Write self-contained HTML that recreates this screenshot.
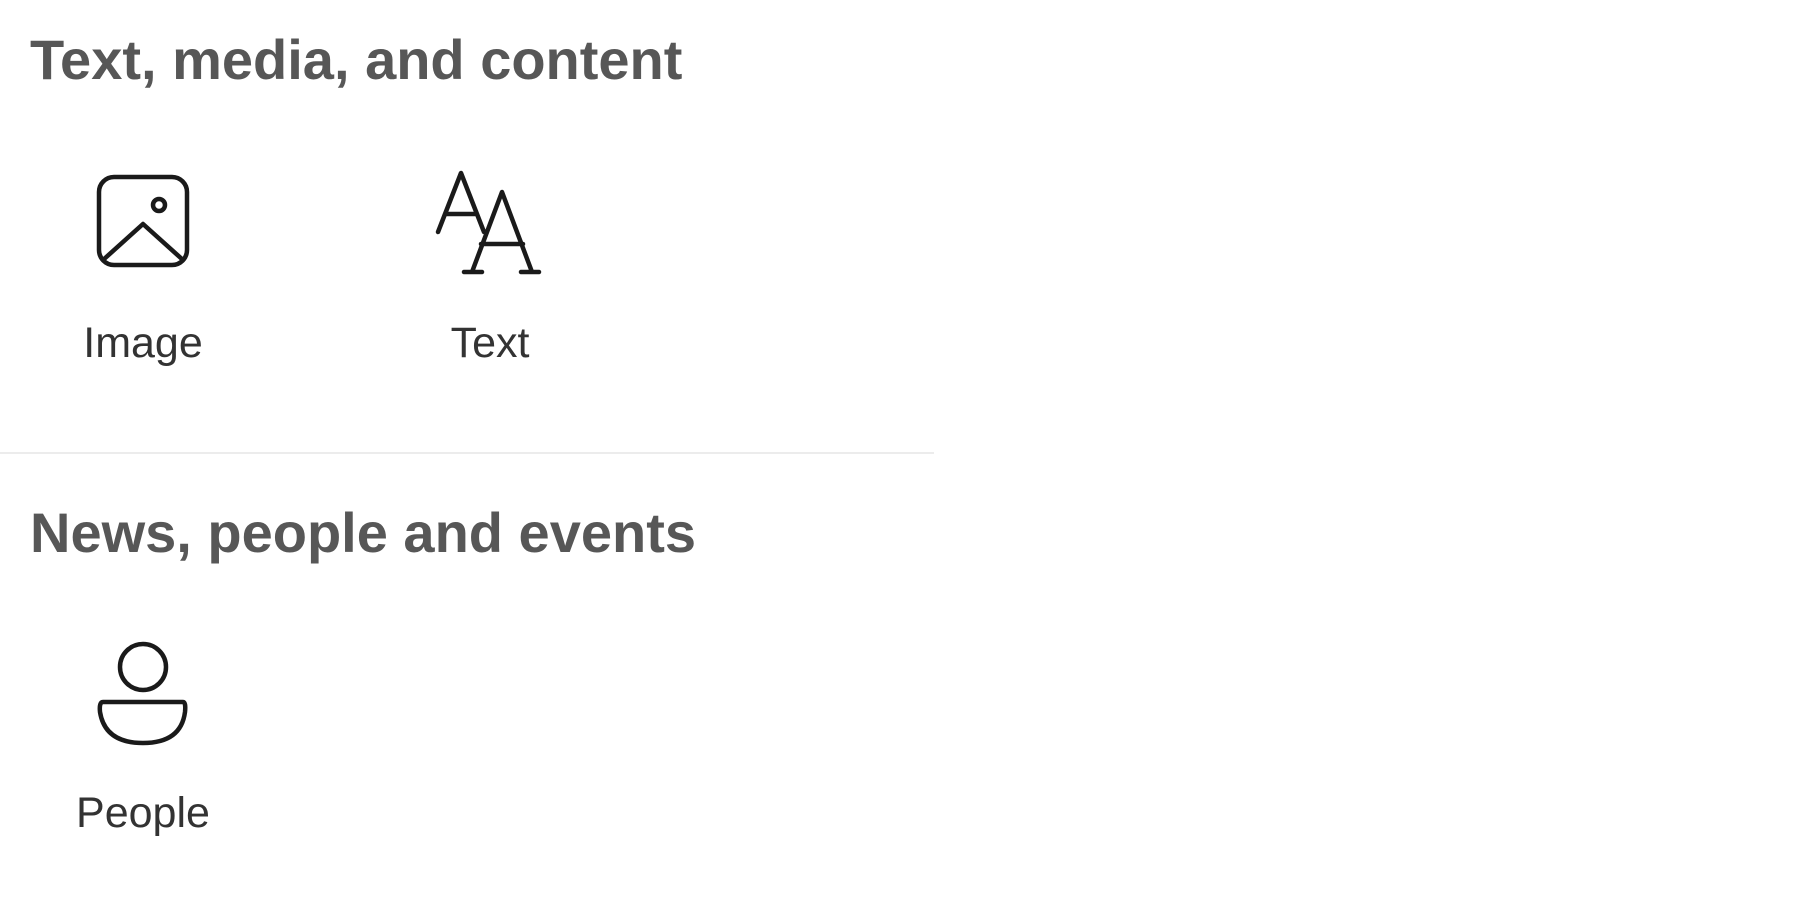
<!DOCTYPE html>
<html><head><meta charset="utf-8"><style>
body{margin:0;width:1800px;height:924px;background:#fff;position:relative;overflow:hidden;font-family:"Liberation Sans",sans-serif}
.h{position:absolute;left:30px;font-weight:bold;color:#575757;font-size:56px;line-height:1;white-space:nowrap}
.l{position:absolute;font-size:43px;color:#333;line-height:1;transform:translateX(-50%);white-space:nowrap}
svg{position:absolute;left:0;top:0}
</style></head><body>
<div class="h" style="top:32px">Text, media, and content</div>
<div class="h" style="top:505px">News, people and events</div>
<div style="position:absolute;left:0;top:452px;width:934px;height:2px;background:#ececec"></div>
<div class="l" style="left:143px;top:322px">Image</div>
<div class="l" style="left:490px;top:322px">Text</div>
<div class="l" style="left:143px;top:792px">People</div>
<svg width="1800" height="924" fill="none" stroke="#1a1a1a" stroke-width="4.5" stroke-linecap="round" stroke-linejoin="round">
<rect x="99" y="177" width="88" height="88" rx="15"/>
<circle cx="159" cy="205" r="6"/>
<path d="M103 260 L143 224 L183 260"/>
<path d="M438 232 L461 173 L484 232 M445 214 L477 214"/>
<path d="M472 272 L502 192 L532 272 M481 244 L523 244 M464 272 L482 272 M521 272 L539 272"/>
<circle cx="143" cy="667" r="23"/>
<path d="M103 702 H183 Q186 702 185 712 Q181 743 143 743 Q105 743 100 712 Q99 702 103 702 Z"/>
</svg>
</body></html>
